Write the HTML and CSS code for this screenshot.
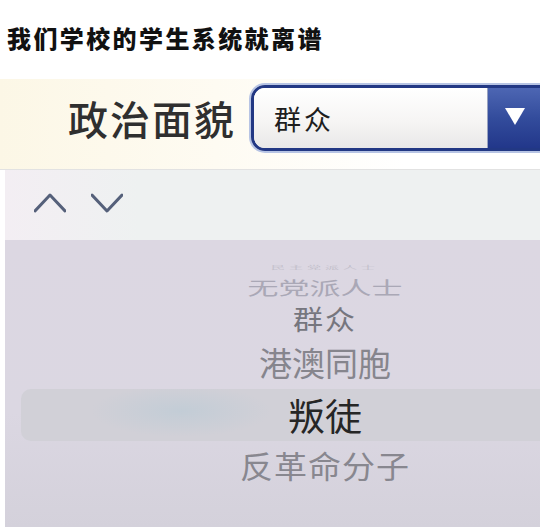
FILE: index.html
```html
<!DOCTYPE html>
<html lang="zh-CN">
<head>
  <meta charset="UTF-8">
  <meta name="viewport" content="width=device-width, initial-scale=1">
  <title>学生系统</title>
  <link rel="stylesheet" href="styles.css">
</head>
<body>
  <h1 class="title">我们学校的学生系统就离谱</h1>

  <!-- 政治面貌 field -->
  <div class="field-row">
    <span class="field-label">政治面貌</span>
    <div class="select">
      <div class="select-value">群众</div>
      <div class="select-btn">
        <svg width="20" height="17" viewBox="0 0 20 17"><polygon points="0,0 20,0 10,17" fill="#fff"/></svg>
      </div>
    </div>
  </div>

  <!-- picker toolbar -->
  <div class="toolbar">
    <svg width="32" height="20" viewBox="0 0 32 20"><polyline points="1,18 16,2 31,18" fill="none" stroke="#55607a" stroke-width="3" stroke-linecap="round" stroke-linejoin="round"/></svg>
    <svg width="32" height="20" viewBox="0 0 32 20"><polyline points="1,2 16,18 31,2" fill="none" stroke="#55607a" stroke-width="3" stroke-linecap="round" stroke-linejoin="round"/></svg>
  </div>

  <!-- wheel picker -->
  <div class="picker">
    <div class="picker-item row0">民主党派人士</div>
    <div class="picker-item row1">无党派人士</div>
    <div class="picker-item row2">群众</div>
    <div class="picker-item row3">港澳同胞</div>
    <div class="picker-item is-selected">叛徒</div>
    <div class="picker-item row5">反革命分子</div>
  </div>
</body>
</html>
```

FILE: styles.css
```css
* { box-sizing: border-box; }

body {
  margin: 0;
  width: 540px;
  height: 528px;
  overflow: hidden;
  background: #fff;
  font-family: "Noto Sans CJK SC", "Noto Sans", sans-serif;
}

.title {
  margin: 0 0 27px;
  padding: 23px 0 0 7px;
  font-size: 24px;
  line-height: 29px;
  font-weight: 900;
  letter-spacing: 2.4px;
  color: #111;
  white-space: nowrap;
}

.field-row {
  display: flex;
  align-items: center;
  gap: 15px;
  height: 91px;
  padding: 0 0 12px 68px;
  background: linear-gradient(90deg, #fcf7e6 0%, #fefbf2 40%, #fff 75%);
  border-bottom: 1px solid #e2e2e2;
}

.field-label {
  font-size: 40px;
  line-height: 48px;
  font-weight: 500;
  letter-spacing: 2px;
  color: #2f2f2f;
  white-space: nowrap;
}

.select {
  flex: none;
  display: flex;
  width: 294px;
  height: 66px;
  border: 3px solid #223884;
  border-radius: 14px 0 0 14px;
  box-shadow: 0 0 0 2px #b7c4e4;
  overflow: hidden;
}

.select-value {
  flex: 1;
  display: flex;
  align-items: center;
  padding-left: 20px;
  font-size: 27px;
  letter-spacing: 3px;
  color: #1e1e1e;
  background: linear-gradient(180deg, #fff 0%, #f6f5f4 55%, #e9e8e8 100%);
  border-right: 1px solid #9aa3c0;
}

.select-btn {
  flex: none;
  width: 54px;
  display: flex;
  align-items: center;
  justify-content: center;
  padding-bottom: 4px;
  background: linear-gradient(180deg, #4d66b3 0%, #334c9c 50%, #22378a 100%);
}

.toolbar {
  display: flex;
  align-items: center;
  gap: 25px;
  height: 70px;
  margin-left: 5px;
  padding: 0 0 4px 29px;
  background: linear-gradient(90deg, #f3eef3 0%, #eef1f1 25%, #eef1f1 100%);
}

.picker {
  width: 640px;
  height: 287px;
  margin-left: 5px;
  padding-top: 20px;
  background: linear-gradient(180deg, #dcd7e2 0%, #dbd7e2 60%, #d4d1db 100%);
}

.picker-item {
  display: flex;
  align-items: center;
  justify-content: center;
  line-height: 1;
  white-space: nowrap;
}

.row0 {
  height: 14px;
  font-size: 14px;
  letter-spacing: 4px;
  color: #c3c0cb;
  transform: scaleY(0.35);
}

.row1 {
  height: 26px;
  font-size: 31px;
  color: #aaa8b6;
  transform: scaleY(0.6);
}

.row2 {
  height: 36px;
  font-size: 30px;
  letter-spacing: 2px;
  color: #76767e;
  transform: scaleY(0.9);
}

.row3 {
  height: 53px;
  font-size: 33px;
  color: #86858d;
}

.is-selected {
  height: 52px;
  margin-left: 16px;
  padding-right: 16px;
  border-radius: 10px;
  font-size: 37px;
  color: #262626;
  background:
    radial-gradient(ellipse 90px 26px at 160px 22px, rgba(192, 204, 214, 0.85), rgba(192, 204, 214, 0) 100%),
    #d1d0d7;
}

.row5 {
  height: 48px;
  font-size: 33px;
  letter-spacing: 1px;
  color: #88878f;
  transform: scaleY(0.92);
}
```
